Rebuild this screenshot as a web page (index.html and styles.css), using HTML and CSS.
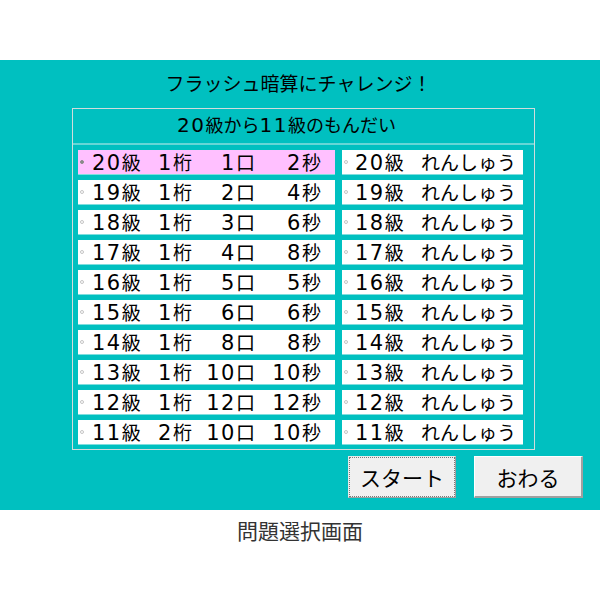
FILE: index.html
```html
<!DOCTYPE html>
<html lang="ja">
<head>
<meta charset="utf-8">
<title>問題選択画面</title>
<link rel="stylesheet" href="styles.css">
</head>
<body>
<div class="screen">
  <div class="title">フラッシュ暗算にチャレンジ！</div>
  <div class="group">
    <div class="group-head"><span class="d">20</span>級から<span class="d">11</span>級のもんだい</div>
    <div class="rows">
      <div class="cell sel"><span class="dot on"></span><div class="lt"><span><span class="d">20</span>級</span><span><span class="d">1</span>桁</span><span class="r"><span class="d">1</span>口</span><span class="r"><span class="d">2</span>秒</span></div></div>
      <div class="cell"><span class="dot"></span><div class="rt"><span><span class="d">20</span>級</span><span>れんしゅう</span></div></div>

      <div class="cell"><span class="dot"></span><div class="lt"><span><span class="d">19</span>級</span><span><span class="d">1</span>桁</span><span class="r"><span class="d">2</span>口</span><span class="r"><span class="d">4</span>秒</span></div></div>
      <div class="cell"><span class="dot"></span><div class="rt"><span><span class="d">19</span>級</span><span>れんしゅう</span></div></div>

      <div class="cell"><span class="dot"></span><div class="lt"><span><span class="d">18</span>級</span><span><span class="d">1</span>桁</span><span class="r"><span class="d">3</span>口</span><span class="r"><span class="d">6</span>秒</span></div></div>
      <div class="cell"><span class="dot"></span><div class="rt"><span><span class="d">18</span>級</span><span>れんしゅう</span></div></div>

      <div class="cell"><span class="dot"></span><div class="lt"><span><span class="d">17</span>級</span><span><span class="d">1</span>桁</span><span class="r"><span class="d">4</span>口</span><span class="r"><span class="d">8</span>秒</span></div></div>
      <div class="cell"><span class="dot"></span><div class="rt"><span><span class="d">17</span>級</span><span>れんしゅう</span></div></div>

      <div class="cell"><span class="dot"></span><div class="lt"><span><span class="d">16</span>級</span><span><span class="d">1</span>桁</span><span class="r"><span class="d">5</span>口</span><span class="r"><span class="d">5</span>秒</span></div></div>
      <div class="cell"><span class="dot"></span><div class="rt"><span><span class="d">16</span>級</span><span>れんしゅう</span></div></div>

      <div class="cell"><span class="dot"></span><div class="lt"><span><span class="d">15</span>級</span><span><span class="d">1</span>桁</span><span class="r"><span class="d">6</span>口</span><span class="r"><span class="d">6</span>秒</span></div></div>
      <div class="cell"><span class="dot"></span><div class="rt"><span><span class="d">15</span>級</span><span>れんしゅう</span></div></div>

      <div class="cell"><span class="dot"></span><div class="lt"><span><span class="d">14</span>級</span><span><span class="d">1</span>桁</span><span class="r"><span class="d">8</span>口</span><span class="r"><span class="d">8</span>秒</span></div></div>
      <div class="cell"><span class="dot"></span><div class="rt"><span><span class="d">14</span>級</span><span>れんしゅう</span></div></div>

      <div class="cell"><span class="dot"></span><div class="lt"><span><span class="d">13</span>級</span><span><span class="d">1</span>桁</span><span class="r"><span class="d">10</span>口</span><span class="r"><span class="d">10</span>秒</span></div></div>
      <div class="cell"><span class="dot"></span><div class="rt"><span><span class="d">13</span>級</span><span>れんしゅう</span></div></div>

      <div class="cell"><span class="dot"></span><div class="lt"><span><span class="d">12</span>級</span><span><span class="d">1</span>桁</span><span class="r"><span class="d">12</span>口</span><span class="r"><span class="d">12</span>秒</span></div></div>
      <div class="cell"><span class="dot"></span><div class="rt"><span><span class="d">12</span>級</span><span>れんしゅう</span></div></div>

      <div class="cell"><span class="dot"></span><div class="lt"><span><span class="d">11</span>級</span><span><span class="d">2</span>桁</span><span class="r"><span class="d">10</span>口</span><span class="r"><span class="d">10</span>秒</span></div></div>
      <div class="cell"><span class="dot"></span><div class="rt"><span><span class="d">11</span>級</span><span>れんしゅう</span></div></div>
    </div>
  </div>
  <div class="buttons">
    <button class="btn focus">スタート</button>
    <button class="btn">おわる</button>
  </div>
</div>
<div class="caption">問題選択画面</div>
</body>
</html>
```

FILE: styles.css
```css
html, body {
  margin: 0;
  padding: 0;
  background: #ffffff;
}

body {
  font-family: "Noto Sans CJK JP", "Noto Sans", sans-serif;
  color: #000;
}

.screen {
  margin-top: 60px;
  height: 450px;
  background: #00c0c0;
  box-sizing: border-box;
}

.title {
  height: 48px;
  line-height: 45px;
  padding-bottom: 3px;
  padding-right: 3px;
  box-sizing: border-box;
  text-align: center;
  font-size: 19px;
}

.group {
  margin-left: 72px;
  width: 463px;
  height: 342px;
  box-sizing: border-box;
  border: 1px solid #d2dcdc;
}

.group-head {
  height: 34px;
  line-height: 30px;
  padding-left: 104px;
  font-size: 18px;
  border-bottom: 2px solid #66d6d6;
}

.group-head .d {
  font-size: 20px;
}

.d {
  font-family: "DejaVu Sans", sans-serif;
  font-size: 21px;
  letter-spacing: 1.5px;
  line-height: 1;
}

.rows {
  display: grid;
  grid-template-columns: 257px 181px;
  column-gap: 7px;
  row-gap: 6px;
  padding: 5px 10px 5px 5px;
}

.cell {
  display: flex;
  align-items: center;
  height: 24px;
  background: #ffffff;
  box-shadow: 0 1px 0 #7fdede;
  font-size: 19px;
  line-height: 24px;
  white-space: nowrap;
}

.cell.sel {
  background: #ffc0ff;
}

.dot {
  box-sizing: border-box;
  width: 4px;
  height: 4px;
  margin-left: 2px;
  margin-right: 7px;
  border-radius: 50%;
  border: 1px solid #c4c4c4;
  background: #fff;
  flex: none;
}

.dot.on {
  border-color: #8a8a8a;
  background: #8a8a8a;
}

.lt {
  display: grid;
  grid-template-columns: 66px 39px 58px 66px;
  margin-left: 1px;
}

.rt {
  display: grid;
  grid-template-columns: 66px auto;
  margin-left: 0;
}

.r {
  text-align: right;
}

.buttons {
  display: flex;
  justify-content: flex-end;
  gap: 18px;
  margin-top: 6px;
  padding-right: 17px;
}

.btn {
  font-family: "Noto Sans CJK JP", sans-serif;
  font-size: 21px;
  color: #000;
  height: 42px;
  width: 109px;
  padding: 0;
  background: #f0f0f0;
  box-sizing: border-box;
  border-style: solid;
  border-width: 1px 2px 2px 1px;
  border-color: #ffffff #a0a0a0 #a0a0a0 #ffffff;
  line-height: 38px;
}

.btn.focus {
  width: 108px;
  border-width: 1px;
  border-color: #e8e8e8 #a0a0a0 #a0a0a0 #e8e8e8;
  outline: 1px dotted #7a7a7a;
  outline-offset: -2px;
}

.caption {
  height: 40px;
  line-height: 40px;
  text-align: center;
  font-size: 21px;
  color: #333333;
}
```
